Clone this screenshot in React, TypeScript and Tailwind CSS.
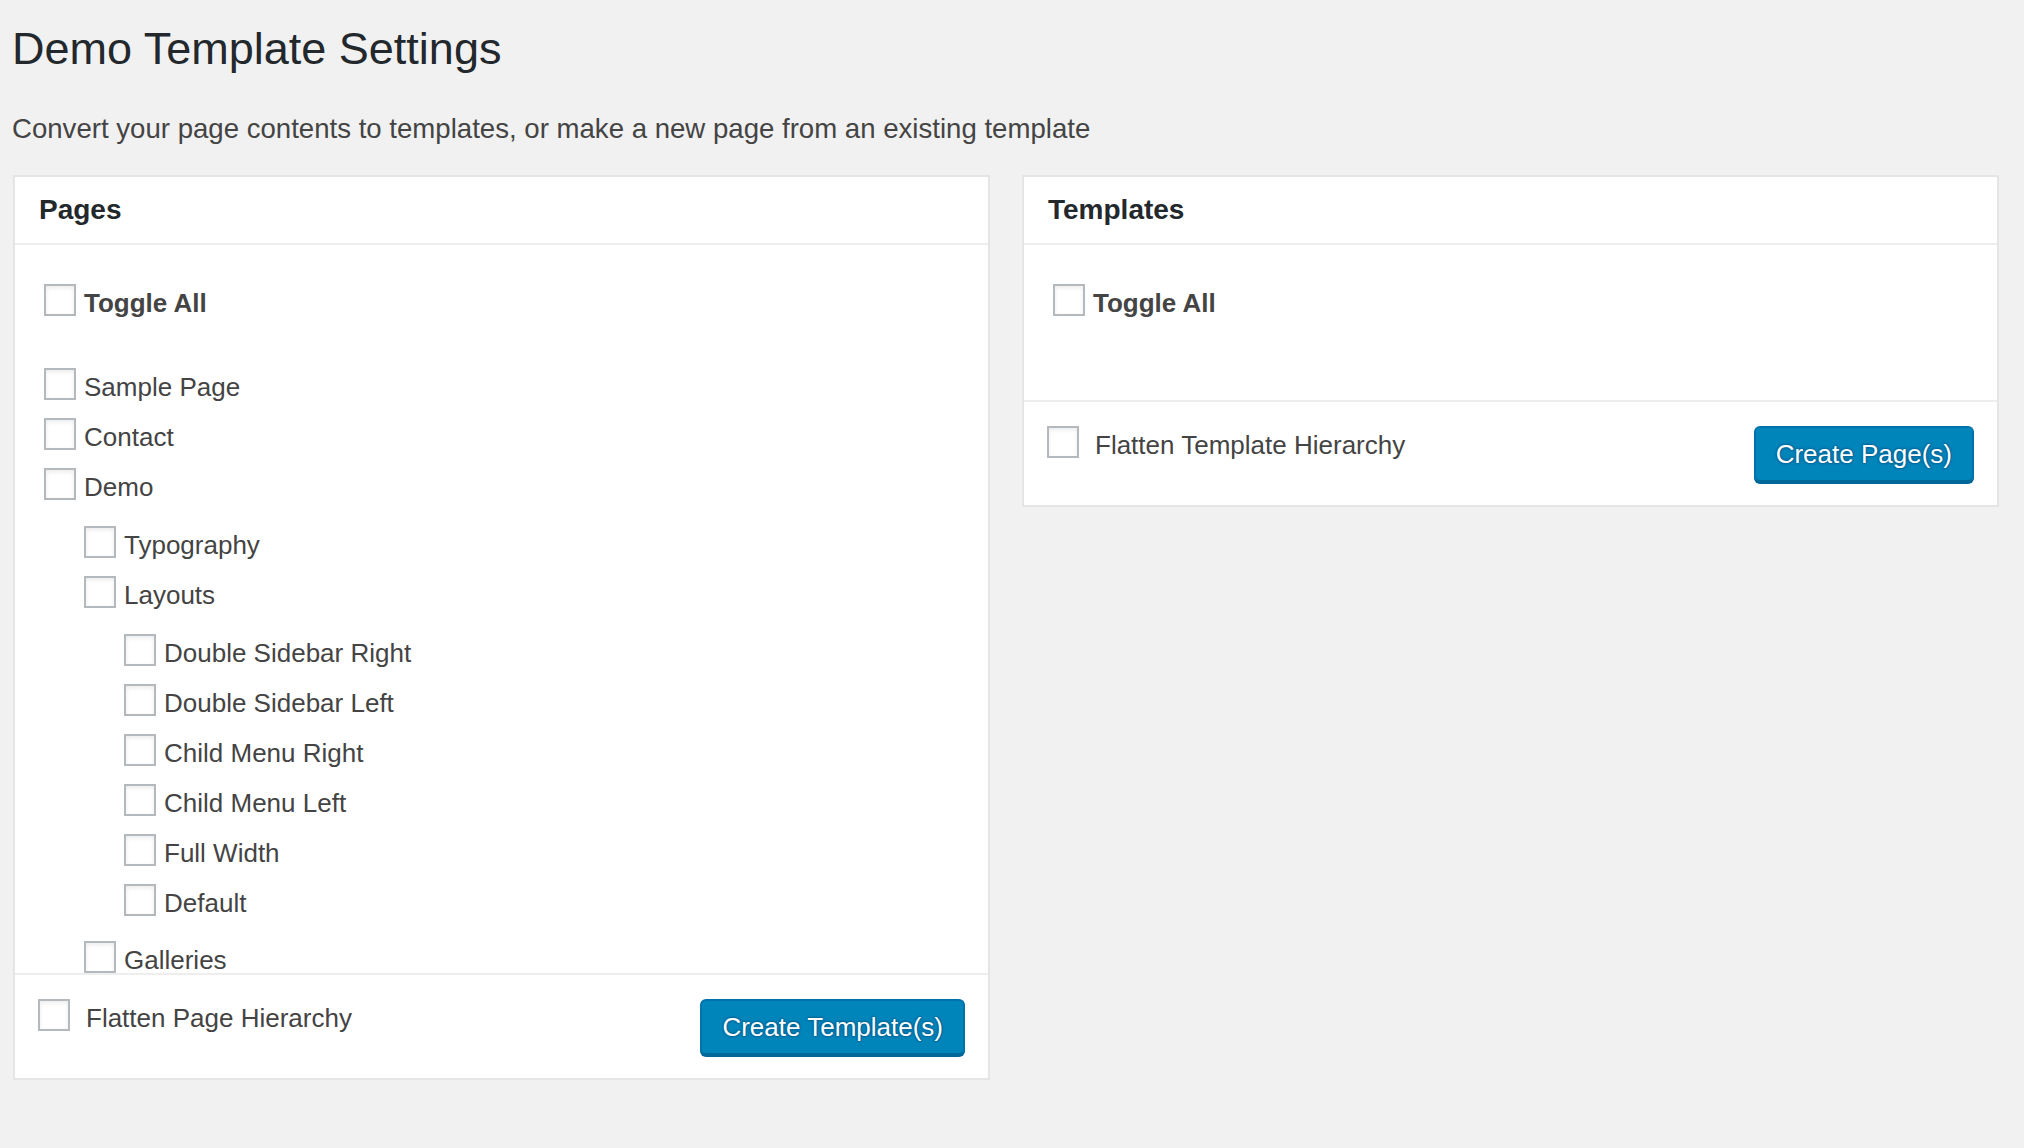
import type { ReactNode } from "react";

type PageNode = {
  label: string;
  children?: PageNode[];
};

const pageTree: PageNode[] = [
  { label: "Sample Page" },
  { label: "Contact" },
  {
    label: "Demo",
    children: [
      { label: "Typography" },
      {
        label: "Layouts",
        children: [
          { label: "Double Sidebar Right" },
          { label: "Double Sidebar Left" },
          { label: "Child Menu Right" },
          { label: "Child Menu Left" },
          { label: "Full Width" },
          { label: "Default" },
        ],
      },
      { label: "Galleries" },
    ],
  },
];

function Checkbox() {
  return (
    <span className="block size-[32px] shrink-0 border-2 border-[#b4b9be] bg-white shadow-[inset_0_2px_4px_rgba(0,0,0,0.08)]" />
  );
}

function CheckRow({ children, bold }: { children: ReactNode; bold?: boolean }) {
  return (
    <label className="flex h-[50px] items-start gap-[8px]">
      <Checkbox />
      <span className={bold ? "text-[26px] leading-[38px] font-bold text-[#444]" : "text-[26px] leading-[38px] text-[#444]"}>
        {children}
      </span>
    </label>
  );
}

function PageList({ nodes, nested }: { nodes: PageNode[]; nested?: boolean }) {
  return (
    <ul className={nested ? "mt-[8px] mb-[7px] pl-[40px]" : ""}>
      {nodes.map((node) => (
        <li key={node.label}>
          <CheckRow>{node.label}</CheckRow>
          {node.children && <PageList nodes={node.children} nested />}
        </li>
      ))}
    </ul>
  );
}

function Panel({ title, body, flattenLabel, buttonLabel }: {
  title: string;
  body: ReactNode;
  flattenLabel: string;
  buttonLabel: string;
}) {
  return (
    <section className="border-2 border-[#e5e5e5] bg-white">
      <header className="flex h-[68px] items-center border-b-2 border-[#eee] px-[24px]">
        <h2 className="text-[28px] leading-none font-bold text-[#23282d]">{title}</h2>
      </header>
      {body}
      <footer className="flex items-start justify-between border-t-2 border-[#eee] pt-[24px] pr-[23px] pb-[23px] pl-[23px]">
        <label className="flex items-start gap-[16px]">
          <Checkbox />
          <span className="text-[26px] leading-[38px] text-[#444]">{flattenLabel}</span>
        </label>
        <button
          type="button"
          className="flex h-[56px] items-center rounded-[6px] border-2 border-[#0073aa] border-b-[#006799] bg-[#0085ba] px-[20px] text-[26px] leading-none text-white shadow-[0_2px_0_#006799] [text-shadow:0_-1px_2px_#006799,1px_0_2px_#006799,0_1px_2px_#006799,-1px_0_2px_#006799]"
        >
          {buttonLabel}
        </button>
      </footer>
    </section>
  );
}

export default function App() {
  return (
    <div className="min-h-screen bg-[#f1f1f1] font-['Liberation_Sans',Arial,sans-serif] pb-[40px]">
      <h1 className="pt-[20px] pl-[12px] text-[45px] leading-[58px] font-normal text-[#23282d]">
        Demo Template Settings
      </h1>
      <p className="mt-[31px] pl-[12px] text-[27.6px] leading-[40px] text-[#444]">
        Convert your page contents to templates, or make a new page from an existing template
      </p>

      <div className="mt-[26px] grid grid-cols-2 items-start gap-[32px] pl-[13px] pr-[25px]">
        <Panel
          title="Pages"
          flattenLabel="Flatten Page Hierarchy"
          buttonLabel="Create Template(s)"
          body={
            <div className="h-[728px] overflow-hidden pt-[39px] pl-[29px]">
              <div className="mb-[34px]">
                <CheckRow bold>Toggle All</CheckRow>
              </div>
              <PageList nodes={pageTree} />
            </div>
          }
        />
        <Panel
          title="Templates"
          flattenLabel="Flatten Template Hierarchy"
          buttonLabel="Create Page(s)"
          body={
            <div className="h-[155px] pt-[39px] pl-[29px]">
              <CheckRow bold>Toggle All</CheckRow>
            </div>
          }
        />
      </div>
    </div>
  );
}
